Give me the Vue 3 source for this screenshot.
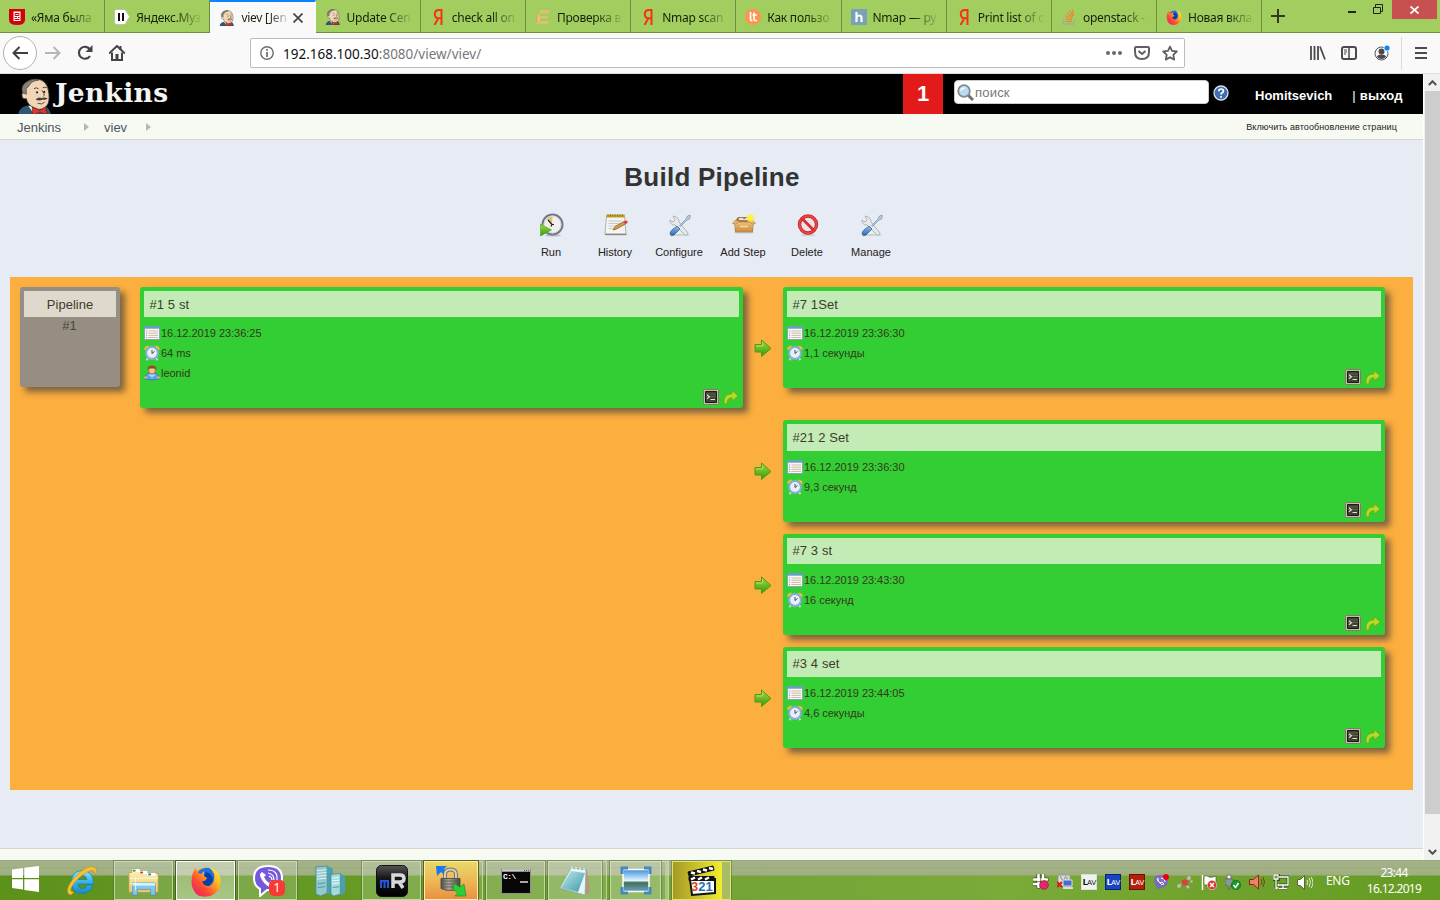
<script setup>
const tabs = [
  { icon: 'news', title: '«Яма была' },
  { icon: 'music', title: 'Яндекс.Муз' },
  { icon: 'butler', title: 'viev [Jen', active: true },
  { icon: 'butler', title: 'Update Cen' },
  { icon: 'yandex', title: 'check all on' },
  { icon: 'cee', title: 'Проверка в' },
  { icon: 'yandex', title: 'Nmap scan' },
  { icon: 'lt', title: 'Как пользо' },
  { icon: 'habr', title: 'Nmap — ру' },
  { icon: 'yandex', title: 'Print list of c' },
  { icon: 'stack', title: 'openstack -' },
  { icon: 'firefox', title: 'Новая вкла,' },
]
const actions = [
  { icon: 'run', label: 'Run' },
  { icon: 'history', label: 'History' },
  { icon: 'tools', label: 'Configure' },
  { icon: 'box', label: 'Add Step' },
  { icon: 'delete', label: 'Delete' },
  { icon: 'tools', label: 'Manage' },
]
const first = { title: '#1 5 st', rows: [['calendar', '16.12.2019 23:36:25'], ['clock', '64 ms'], ['user', 'leonid']] }
const steps = [
  { title: '#7 1Set', rows: [['calendar', '16.12.2019 23:36:30'], ['clock', '1,1 секунды']] },
  { title: '#21 2 Set', rows: [['calendar', '16.12.2019 23:36:30'], ['clock', '9,3 секунд']] },
  { title: '#7 3 st', rows: [['calendar', '16.12.2019 23:43:30'], ['clock', '16 секунд']] },
  { title: '#3 4 set', rows: [['calendar', '16.12.2019 23:44:05'], ['clock', '4,6 секунды']] },
]
const apps = [
  { icon: 'ie' },
  { icon: 'explorer', cls: 'open' },
  { icon: 'firefox', cls: 'open focus' },
  { icon: 'viber', cls: 'open' },
  { icon: 'servers' },
  { icon: 'mr', cls: 'open' },
  { icon: 'lock', cls: 'open alert stacked' },
  { icon: 'cmd', cls: 'open' },
  { icon: 'notepad', cls: 'open stacked' },
  { icon: 'picture', cls: 'open stacked twice' },
  { icon: 'clapper', cls: 'open progress' },
]
const tray = ['slack', 'netpc', 'lavw', 'lavb', 'lavr', 'viberS', 'molecule', 'flag', 'usb', 'spkred', 'network', 'speaker']
</script>

<template>
  <div class="screen">
    <svg class="defs" width="0" height="0">
      <defs>
        <linearGradient id="gBlue" x1="0" y1="0" x2="0" y2="1"><stop offset="0" stop-color="#8fc0ee" /><stop offset="1" stop-color="#2a64ae" /></linearGradient>
        <linearGradient id="gGreen" x1="0" y1="0" x2="0" y2="1"><stop offset="0" stop-color="#a8dc3c" /><stop offset="1" stop-color="#2f9a10" /></linearGradient>
        <linearGradient id="gBox" x1="0" y1="0" x2="0" y2="1"><stop offset="0" stop-color="#eec07c" /><stop offset="1" stop-color="#c98a3a" /></linearGradient>
        <linearGradient id="gFox" x1="1" y1="0" x2="0" y2="1"><stop offset="0" stop-color="#fff44f" /><stop offset=".35" stop-color="#ffb01f" /><stop offset=".65" stop-color="#ff4a32" /><stop offset="1" stop-color="#e5167a" /></linearGradient>
        <linearGradient id="gIe" x1="0" y1="0" x2="0" y2="1"><stop offset="0" stop-color="#8ee3fa" /><stop offset=".5" stop-color="#35b4e8" /><stop offset="1" stop-color="#178cc8" /></linearGradient>
        <linearGradient id="gFolder" x1="0" y1="0" x2="0" y2="1"><stop offset="0" stop-color="#fdf3b8" /><stop offset="1" stop-color="#eacb6c" /></linearGradient>
        <linearGradient id="gTeal" x1="0" y1="0" x2="1" y2="1"><stop offset="0" stop-color="#bfe9ea" /><stop offset="1" stop-color="#3c9aaa" /></linearGradient>
        <linearGradient id="gSky" x1="0" y1="0" x2="0" y2="1"><stop offset="0" stop-color="#3c8ee2" /><stop offset=".5" stop-color="#e0f2fb" /><stop offset=".6" stop-color="#45705b" /><stop offset="1" stop-color="#69a3c0" /></linearGradient>
        <linearGradient id="gDark" x1="0" y1="0" x2="0" y2="1"><stop offset="0" stop-color="#555" /><stop offset=".4" stop-color="#171717" /><stop offset="1" stop-color="#000" /></linearGradient>
        <linearGradient id="gMetal" x1="0" y1="0" x2="1" y2="0"><stop offset="0" stop-color="#55524c" /><stop offset=".4" stop-color="#aaa59b" /><stop offset="1" stop-color="#4a4741" /></linearGradient>
      </defs>
      <symbol id="news" viewBox="0 0 16 16"><path d="M0 0h16v11q0 5-8 5T0 11z" fill="#d4000c" /><path d="M4.5 2.5h7v9.500h-7z" fill="#fff" /><path d="M6 4.500h4v2H6zM5.500 8.500h2.500M9 8.500h1.500M5.500 10.500h5" stroke="#d4000c" fill="none" /></symbol>
      <symbol id="music" viewBox="0 0 16 16"><path d="M2.500.500h8.500l4.500 7-4.500 8H2.500q-2 0-2-2v-11q0-2 2-2z" fill="#fff" stroke="#b9c7a4" /><path d="M5 4v8M9 4v8" stroke="#111" stroke-width="2" /></symbol>
      <symbol id="butler" viewBox="0 0 33 36">
        <path d="M0 36Q1 29 8 27l15-1q8 2 9 10z" fill="#31556c" /><path d="M10 27l6 9 7-9z" fill="#e8eef0" />
        <path d="M5 14Q4 2 17 1q12 0 13 14 1 8-2 12-4 5-10 3Q9 27 8 20q-4-1-3-6z" fill="#f0d6b7" stroke="#332d26" stroke-width=".8" />
        <path d="M5 16Q1 7 10 3q5-3 10-1-7 1-9 5-1 2-3 3v6l-1-1z" fill="#85807a" stroke="#3b3733" stroke-width=".6" />
        <path d="M6 15q-3-1-2 2 0 4 4 3" fill="#f0d6b7" stroke="#5a4b3c" stroke-width=".7" />
        <path d="M15.500 10.500q2-2 4.500 0M24 9.500q2-1 4 0M23 12q4 4 1.500 6" fill="none" stroke="#4b3b2c" stroke-width=".9" />
        <circle cx="18.500" cy="14" r="1" fill="#222" /><circle cx="25.500" cy="13.500" r="1" fill="#222" />
        <path d="M17 21q3-3 6-1.500 3-1.500 6 .5-3 2-5 1-3 2-7 0z" fill="#4a4039" /><path d="M19 24.500q4 2 7-1" fill="none" stroke="#6b3a2d" stroke-width=".9" />
        <path d="M14 28l7 3.500 6-3.500 1 7.500-7-2-7 2.500z" fill="#d33833" stroke="#73140f" stroke-width=".6" />
      </symbol>
      <symbol id="yandex" viewBox="0 0 16 16"><path d="M11.500 0v16M12 1H9Q4.800 1 4.800 5.200q0 4 4 4H12M8.500 9L4.500 16" fill="none" stroke="#f7330e" stroke-width="2" /></symbol>
      <symbol id="cee" viewBox="0 0 16 16"><path d="M4 1h11l-1 3.500H5zM1 6l4-1v7H13l1 1-1 2H1z" fill="#e0be6c" /><path d="M4 7.500h9V9H5v2H3z" fill="#e6c37c" /><path d="M1.500 6v8" stroke="#e69b72" /></symbol>
      <symbol id="lt" viewBox="0 0 16 16"><circle cx="8" cy="8" r="8" fill="#ff9450" /><path d="M5.500 3v7q0 2 2 1.500M9 3.500v6q0 2.500 3 2M7.500 6H12" fill="none" stroke="#fff" stroke-width="1.700" /></symbol>
      <symbol id="habr" viewBox="0 0 16 16"><path d="M0 0h16v16H0z" fill="#78a2b7" /><path d="M5.500 3v10M5.500 8.500q1-2 3-2 2 0 2 2.500v4" fill="none" stroke="#fff" stroke-width="2.200" /></symbol>
      <symbol id="stack" viewBox="0 0 16 16"><path d="M2 10v5h11v-5" fill="none" stroke="#a8ab9b" stroke-width="1.300" /><path d="M4 12.500h7M4 10l7 .8M4.500 7l6.500 2.200M6 4l5.500 4M8.500 1.500L12 7M11.500.500l1 6" stroke="#ef8236" stroke-width="1.200" /></symbol>
      <symbol id="firefox" viewBox="0 0 32 32"><circle cx="16" cy="17" r="14.500" fill="url(#gFox)" /><path d="M8 7q5-5 11-4 7 4 5 12-2 8-10 6z" fill="#1e6fe8" /><path d="M16 7q7 2 7 9l-5 6-8-2z" fill="#0a3ea6" /><path d="M2 17Q1 8 6 3l1 5 4 1 3-3v5l3 2q-1 3-5 3.500 3 6 9 4 6-3 4-10-2-3-3-8 10 6 8 16-3 12-15 13T2 17z" fill="url(#gFox)" /></symbol>

      <symbol id="run" viewBox="0 0 24 24"><ellipse cx="13" cy="22.500" rx="8" ry="1" fill="#b9bec7" /><circle cx="12.500" cy="11.500" r="10" fill="#f0f0ec" stroke="#77748f" stroke-width="2" /><circle cx="12.500" cy="11.500" r="8.500" fill="none" stroke="#cfcfd6" stroke-width=".8" /><path d="M12 11L6.500 6q2.500-2.500 6-2.500z" fill="#dcc766" /><path d="M8 7l4 4.500M12 11.500h2M12 11.500l-1 2" stroke="#222" stroke-width="1.200" fill="none" /><path d="M.500 11l11 6-11 6z" fill="url(#gGreen)" stroke="#48a42c" stroke-width=".6" /></symbol>
      <symbol id="history" viewBox="0 0 24 24"><path d="M2.500 3h18l1.500 18H1z" fill="#f4f4f0" stroke="#a2a2a0" stroke-width=".8" /><path d="M1 21.500h21.500" stroke="#85857f" stroke-width="1.300" /><path d="M2.500 1.500h18v3h-18z" fill="#c2a22d" /><path d="M3.500 2.500h17" stroke="#8a7219" stroke-width="2" stroke-dasharray="1 1.400" /><path d="M4.500 8h13M4.500 10.500h11M4.500 13h6M4.500 15.500h4" stroke="#c0c2c5" stroke-width=".9" /><path d="M9 17l2-3.500 9-5 1.500 2.500-9 5z" fill="#e0993f" stroke="#7b5028" stroke-width=".7" /><path d="M19.500 8.500l2.500-1q2 0 1.500 2.500l-2 1z" fill="#dd3c39" /></symbol>
      <symbol id="tools" viewBox="0 0 24 24"><ellipse cx="12" cy="22" rx="10" ry="1" fill="#ccd1da" /><path d="M5 3l2 4-2 2-3-2q0 5 5 5l10 10q3 1 3-2L11 9q0-5-6-6z" fill="#e6e9ea" stroke="#a2a7a9" stroke-width=".8" /><path d="M22 2l-2.500 1-2 3.500-6 6 1 1 6-6L22 5.500z" fill="#b7cbe0" stroke="#8799ae" stroke-width=".8" /><path d="M9 13l3 3-6 6q-3 2-4-1 0-2 2-4z" fill="url(#gBlue)" stroke="#3a659c" stroke-width=".8" /></symbol>
      <symbol id="box" viewBox="0 0 24 24"><ellipse cx="12" cy="19.500" rx="10" ry="1" fill="#c5cad3" /><path d="M3 8l3-4h12l3 4v11H3z" fill="#a87438" /><path d="M6 7.500l1-3h4l1 1.500 2-1.500h3l1 3z" fill="#ece4da" stroke="#8d6a4a" stroke-width=".7" /><path d="M2.500 9h19l-1 10h-17z" fill="url(#gBox)" stroke="#b98540" stroke-width=".7" /><path d="M3 7.500L.500 10.500l3.500.500 3-3zM21 7.500l2.500 3-3.500.500-3-3z" fill="#edb86c" stroke="#b98540" stroke-width=".7" /><path d="M8 13.500h8" stroke="#f3d8ab" stroke-width="1.500" /><circle cx="18.500" cy="5" r="4" fill="#fbe96c" opacity=".7" /><circle cx="18.500" cy="5" r="2.800" fill="#fbf62e" /></symbol>
      <symbol id="delete" viewBox="0 0 24 24"><ellipse cx="12" cy="22" rx="7" ry="1" fill="#c5cad3" /><circle cx="12" cy="11.500" r="8.500" fill="#eae6e8" stroke="#c2242a" stroke-width="3.400" /><circle cx="12" cy="11.500" r="8.500" fill="none" stroke="#ea4444" stroke-width="2" /><path d="M6 5.500l12 12" stroke="#d92e31" stroke-width="2.800" /></symbol>
      <symbol id="calendar" viewBox="0 0 16 16"><path d="M.500 2h15v12.500H.500z" fill="#f8f7f0" stroke="#8fa2b2" /><path d="M0 2.500h16" stroke="#6a9bca" stroke-width="2.400" /><path d="M2 6h1.200M2 8.200h1.200M2 10.400h1.200M2 12.500h1.200" stroke="#7aa7d2" /><path d="M4.500 6H14M4.500 8.200H14M4.500 10.400H14M4.500 12.500H14" stroke="#c6b5a6" stroke-width=".9" /></symbol>
      <symbol id="clock" viewBox="0 0 16 16"><path d="M.800 5Q0 .800 5 1zM15.200 5q.8-4.200-4.200-4z" fill="#f6d04a" stroke="#e6ac3d" stroke-width=".8" /><path d="M4 13l-1.500 2.200M12 13l1.500 2.200" stroke="#c7d6dd" stroke-width="2" /><circle cx="8" cy="8" r="5.900" fill="#e6f0f6" stroke="#85afd6" stroke-width="2" /><path d="M8 5v3.500l2.500-2" fill="none" stroke="#3f4a58" stroke-width="1" /></symbol>
      <symbol id="user" viewBox="0 0 16 16"><path d="M1 14q0-5.500 5-6h4q5 .5 5 6-7 2-14 0z" fill="#5fa3ea" stroke="#2f70b4" stroke-width=".8" /><path d="M4 9.500l4 3 4-3" fill="#b4dbfc" /><circle cx="8" cy="5.500" r="3.500" fill="#f3c393" stroke="#8a4a21" stroke-width=".6" /><path d="M3.800 5Q3 .500 8 .500T12.200 5l-1.700-1.500h-5z" fill="#934b1d" /><path d="M.500 11.500h2.200v2H.500zM13.300 11.500h2.200v2h-2.200z" fill="#f0bb8b" /></symbol>
      <symbol id="arrow" viewBox="0 0 18 18"><path d="M1 5.500h6.500V1L17 9.500l-9.500 8v-4.500H1z" fill="url(#gGreen)" stroke="#4d9a1c" /><path d="M2 7h6.500V3.500" fill="none" stroke="#b5dc62" /></symbol>
      <symbol id="console" viewBox="0 0 16 16"><path d="M.500 1.500q0-1 1-1h13q1 0 1 1v13q0 1-1 1h-13q-1 0-1-1z" fill="#c5bdaf" stroke="#85796a" /><path d="M2.500 2.500h11v11h-11z" fill="#3d4430" stroke="#1b1a12" /><path d="M3 5h10M3 7.500h10" stroke="#5c6549" /><path d="M4 5.800l2.500 2L4 9.800M7.500 10.500H12" fill="none" stroke="#dfe3d3" stroke-width="1.100" /></symbol>
      <symbol id="redo" viewBox="0 0 16 16"><path d="M1 15q-1.200-10 8-10.200V1.500L15.300 7 9 12V8.800Q4 8.500 4 15z" fill="#b2dc28" stroke="#6ea81a" stroke-width=".9" /></symbol>

      <symbol id="ie" viewBox="0 0 32 32"><path d="M27 20q-3 8.500-11 8.500-10.500 0-10.500-11.500T17 5.500q10.500 1 10.500 13.500H12q1 5 5 4.500 3 0 4-3.500zM12 14.500h9q-1-4-4.500-4T12 14.500z" fill="url(#gIe)" stroke="#147bb5" stroke-width=".7" /><path d="M3 29.500Q-1.500 25 7 14 21-1.500 29 2.500q2.500 2 .5 8-.5-5.500-4-5Q18 7 9 17 1 27 8 27q-3 4-5 2.500z" fill="#f7c22f" stroke="#c98918" stroke-width=".5" /></symbol>
      <symbol id="explorer" viewBox="0 0 34 32"><path d="M1 7h3V3h9v3h7v2h12v20H1z" fill="url(#gFolder)" stroke="#b69e58" stroke-width=".8" /><path d="M4.500 3.500h8v3h-8zM12.500 5.500h8v3h-8zM20.500 7.500h9v3h-9z" fill="#fff" /><path d="M5 4h3v2H5z" fill="#2fa03c" /><path d="M13 6h3v2h-3z" fill="#c8402f" /><path d="M21.500 8h3v2h-3z" fill="#2679c5" /><path d="M2 13h30" stroke="#fff8cf" /><path d="M5 31V18h24v13h-5v-6H10v6z" fill="#86c6e8" stroke="#4a93c0" stroke-width=".8" /><path d="M5 18h24v3H5z" fill="#d3f0fb" /><path d="M8 12v14M2 19h12" stroke="#fff" opacity=".7" /></symbol>
      <symbol id="viber" viewBox="0 0 32 32"><path d="M16 1Q2 1 2 13q0 8 6 11v7l7-6q15 1 15-12Q30 1 16 1z" fill="#7459dd" stroke="#fff" stroke-width="2" /><path d="M10 7q-4 2 0 8 5 8 11 7 3-2 2-4l-4-2-2 2q-4-3-5-6l2-2z" fill="#fff" /><path d="M16 8q6 1 6 7M16 5q10 0 9 10M17 11q3 1 3 4" fill="none" stroke="#fff" stroke-width="1.200" /></symbol>
      <symbol id="servers" viewBox="0 0 34 34"><path d="M2 2l12-1v29l-7 3-5-2z" fill="#92c8d0" stroke="#397f91" stroke-width=".7" /><path d="M14 1l6 3v25l-6 2z" fill="#4aa0b0" /><path d="M18 10l10-1v22l-7 2-3-2z" fill="#a4dade" stroke="#397f91" stroke-width=".7" /><path d="M28 9l5 3v18l-5 2z" fill="#4aa0b0" /><path d="M3 6l10-1M3 9l10-1M3 12l10-1M3 15l10-1M19 14l8-1M19 17l8-1M19 20l8-1" stroke="#edf9f8" /><path d="M4 20l8-1M4 24l8-1M20 24l7-1" stroke="#4f98a6" /></symbol>
      <symbol id="mr" viewBox="0 0 32 32"><rect x=".5" y=".5" width="31" height="31" rx="5" fill="url(#gDark)" stroke="#111" /><path d="M5 23v-7h7v7M8.500 16v7" fill="none" stroke="#2458d4" stroke-width="2" /><path d="M17 23V10h7q4 0 4 3.500T24 17h-7M23 17l4 6" fill="none" stroke="#d8d9dc" stroke-width="3.500" /></symbol>
      <symbol id="lock" viewBox="0 0 32 32"><path d="M1 1h11L9 4l3 4-2 3-4-4-4 4z" fill="#1778ef" /><path d="M10 15V9.500Q10 4.500 15.500 4.500T21 9.500V15" fill="none" stroke="#77736b" stroke-width="4" /><path d="M10 15V9.500Q10 4.500 15.500 4.500T21 9.500V15" fill="none" stroke="#d2cfc8" stroke-width="2" /><path d="M6 13.500h19v10q-9.500 4-19 0z" fill="url(#gMetal)" stroke="#45413b" stroke-width=".8" /><path d="M7 16h17M7 19h17M7 22h17" stroke="#54504a" stroke-width=".7" /><path d="M19 18l6 4 4-3 2 12H20l3-3-5-4z" fill="#2ad033" stroke="#17872a" stroke-width=".6" /></symbol>
      <symbol id="cmd" viewBox="0 0 32 32"><path d="M1.500 4.500h29v24h-29z" fill="#070707" stroke="#8b938a" /><path d="M2 5.500h28" stroke="#c7cbce" stroke-width="2.400" /><path d="M24 5.500h5" stroke="#555" stroke-dasharray="1 1" /><path d="M20 17h8" stroke="#fff" stroke-width="1.300" /></symbol>
      <symbol id="notepad" viewBox="0 0 32 32"><path d="M14 3l14 2 3 22-5 3L2 24z" fill="#b3977a" /><path d="M12 3l15 2-1 25L1 23z" fill="#e8f5f4" stroke="#7badb0" stroke-width=".7" /><path d="M12 6l14 2-7 19L2 23z" fill="url(#gTeal)" /><path d="M13 1.500v4M17 2v4M21 2.500v4M25 3v4" stroke="#f8fbf9" /></symbol>
      <symbol id="picture" viewBox="0 0 32 32"><path d="M3 4.500h26v22H3z" fill="url(#gSky)" stroke="#fff" stroke-width="1.500" /><path d="M2 9V3h6M24 3h6v6M30 22v6h-6M8 28H2v-6" fill="none" stroke="#4589bd" stroke-width="3" /></symbol>
      <symbol id="clapper" viewBox="0 0 32 32"><path d="M4 14h25v14L6 30z" fill="#fff" stroke="#111" stroke-width="2" /><path d="M2 7L27 1l1 4L3 11zM3 11.500h25v4H3z" fill="#111" stroke="#111" /><path d="M5 7.500l4 1M11 6l4 1M17 4.500l4 1M23 3l4 1M5 14.500l4-2M12 14.500l4-2M19 14.500l4-2" stroke="#fff" stroke-width="2.500" /></symbol>

      <symbol id="slack" viewBox="0 0 16 16"><path d="M5.500 1v12M10 1v8M1 5.500h13M1 10h8" stroke="#3c5a20" stroke-width="4.200" stroke-linecap="round" /><path d="M5.500 1v12M10 1v8M1 5.500h13M1 10h8" stroke="#fff" stroke-width="2.600" stroke-linecap="round" /><path d="M7.700 1v12M2 7.700h12" stroke="#4d6e2c" stroke-width=".8" /><circle cx="11" cy="11" r="4.400" fill="#e9236e" stroke="#81223f" stroke-width=".6" /></symbol>
      <symbol id="netpc" viewBox="0 0 16 16"><path d="M1 1h12v11H1z" fill="#d8dedc" stroke="#929892" /><path d="M3 2l3 5 3-5M10 3v4" fill="none" stroke="#888" /><path d="M6 6h9v6H6z" fill="#456bd4" stroke="#ddd" /><path d="M6 14h10" stroke="#ddd" stroke-width="2" /><path d="M0 8l5 5M5 8l-5 5" stroke="#d61a19" stroke-width="2" /></symbol>
      <symbol id="viberS" viewBox="0 0 16 16"><path d="M7 1Q0 1 1 8q1 4 3 5v3l3-2q8 0 8-7T7 1z" fill="#7b6bbc" /><path d="M5 4q-2 1 1 4 3 4 5 2L9 8 7 9 5 7zM8 4q4 0 4 4" fill="none" stroke="#fff" /><circle cx="13" cy="3" r="3" fill="#ed0016" /></symbol>
      <symbol id="molecule" viewBox="0 0 16 16"><path d="M1 12l6-4 6-5M6 9l5 4" stroke="#bbb5ab" stroke-width="1.500" /><circle cx="8" cy="8.500" r="3.300" fill="#d0463a" /><g fill="#c2b8b0"><circle cx="2" cy="12" r="2" /><circle cx="12" cy="4" r="2" /><circle cx="11" cy="13" r="1.500" /><circle cx="14.500" cy="7.500" r="1.200" /></g></symbol>
      <symbol id="flag" viewBox="0 0 16 16"><path d="M1.500 1v15" stroke="#fff" stroke-width="1.500" /><path d="M3 2q3-1 5 1 3 1 7-1v9H3z" fill="#fff" stroke="#435f32" stroke-width=".7" /><circle cx="11" cy="11" r="4.700" fill="#d63732" stroke="#fff" stroke-width=".5" /><path d="M9 9l4 4M13 9l-4 4" stroke="#fff" stroke-width="1.500" /></symbol>
      <symbol id="usb" viewBox="0 0 16 16"><path d="M2 1h4v4H2z" fill="#eee" stroke="#777" /><path d="M0 5h8v5l-3 2v3H3v-3l-3-2z" fill="#8d9891" stroke="#555" stroke-width=".6" /><circle cx="11" cy="11" r="4.700" fill="#169a2c" stroke="#076917" stroke-width=".6" /><path d="M8.500 11l2 2.500L13.500 9" fill="none" stroke="#fff" stroke-width="1.500" /></symbol>
      <symbol id="spkred" viewBox="0 0 16 16"><path d="M.500 5.500h4l5-4.500v14l-5-4.500h-4z" fill="#ed8068" stroke="#91230f" /><path d="M12 5q2 3 0 6M14 3q3 5 0 10" fill="none" stroke="#783d15" /></symbol>
      <symbol id="network" viewBox="0 0 16 16"><path d="M6 3h9v8H6M10 11v3M6 14.500h8M.500.500h5v5h-5zM3 6v8" fill="none" stroke="#334c1c" stroke-width="2.800" /><path d="M6 3h9v8H4.500M10 11v3M6 14.500h8M1 1h4v4H1zM3 5v9h2" fill="none" stroke="#fff" stroke-width="1.300" /></symbol>
      <symbol id="speaker" viewBox="0 0 16 16"><path d="M.500 5.500h3l4-4v14l-4-4h-3z" fill="#fff" stroke="#56683f" /><path d="M10 6q1.500 2.500 0 5M12 4q3 4 0 9M14 3q4 6 0 11" fill="none" stroke="#e3ebd8" /></symbol>
    </svg>

    <div class="tabbar">
      <div v-for="(t, i) in tabs" :key="i" class="tab" :class="{ active: t.active }">
        <svg class="fav"><use :href="'#' + t.icon" /></svg>
        <span class="tab-title">{{ t.title }}</span>
        <svg v-if="t.active" class="tab-close" viewBox="0 0 10 10"><path d="M.5.5l9 9M9.500.5l-9 9" stroke="#444" stroke-width="1.7" /></svg>
      </div>
      <svg class="plus" viewBox="0 0 14 14"><path d="M7 0v14M0 7h14" stroke="#2f3c1f" stroke-width="2" /></svg>
      <div class="winctl">
        <svg width="10" height="14" viewBox="0 0 10 14"><path d="M1 12h8" stroke="#222" stroke-width="2" /></svg>
        <svg width="10" height="10" viewBox="0 0 10 10"><path d="M.5 3.500h7v6h-7zM2.500 3V.500h7v7H8" fill="none" stroke="#222" /></svg>
        <div class="winclose"><svg width="9" height="8" viewBox="0 0 9 8"><path d="M.5.500l8 7M8.500.500l-8 7" stroke="#fff" stroke-width="1.700" /></svg></div>
      </div>
    </div>

    <div class="navbar">
      <div class="back"><svg width="16" height="14" viewBox="0 0 16 14"><path d="M16 7H1.500M7.500 1l-6 6 6 6" fill="none" stroke="#3f3f42" stroke-width="2" /></svg></div>
      <svg class="fwd" width="16" height="14" viewBox="0 0 16 14"><path d="M0 7h14.500M8.500 1l6 6-6 6" fill="none" stroke="#b6b6b7" stroke-width="2" /></svg>
      <svg class="reload" width="16" height="16" viewBox="0 0 16 16"><path d="M13 11a6 6 0 1 1 0-6.500" fill="none" stroke="#444448" stroke-width="2.200" /><path d="M15.500 0v7h-7z" fill="#444448" /></svg>
      <svg class="home" width="16" height="16" viewBox="0 0 16 16"><path d="M0 8.500L8 1l8 7.500" fill="none" stroke="#444448" stroke-width="2" /><path d="M3 7.500v7.500h10V7.500M11.500 1v4" fill="none" stroke="#444448" stroke-width="2" /><path d="M6.500 9h3v6h-3z" fill="#444448" /></svg>
      <div class="url">
        <svg width="14" height="14" viewBox="0 0 14 14"><circle cx="7" cy="7" r="6.200" fill="none" stroke="#6c6c70" stroke-width="1.400" /><path d="M7 6v5M7 3v1.800" stroke="#6c6c70" stroke-width="1.700" /></svg>
        <span class="addr">192.168.100.30<i>:8080/view/viev/</i></span>
        <svg class="push" width="16" height="4" viewBox="0 0 16 4"><g fill="#68686b"><circle cx="2" cy="2" r="2" /><circle cx="8" cy="2" r="2" /><circle cx="14" cy="2" r="2" /></g></svg>
        <svg width="16" height="14" viewBox="0 0 16 14"><path d="M2 1h12q1 0 1 1v4q0 7-7 7T1 6V2q0-1 1-1z" fill="none" stroke="#606064" stroke-width="2" /><path d="M4.500 5L8 8l3.500-3" fill="none" stroke="#606064" stroke-width="2" /></svg>
        <svg width="16" height="16" viewBox="0 0 16 16"><path d="M8 1.500l2 4.400 4.800.6-3.500 3.300.9 4.800L8 12.200l-4.200 2.400.9-4.800L1.200 6.500 6 5.900z" fill="none" stroke="#606064" stroke-width="1.800" stroke-linejoin="round" /></svg>
      </div>
      <svg class="lib" width="16" height="14" viewBox="0 0 16 14"><path d="M1 0v14M4.500 0v14M8 0v14M10 .500l5 13" stroke="#4a4a4f" stroke-width="1.800" /></svg>
      <svg class="side" width="16" height="14" viewBox="0 0 16 14"><rect x="1" y="1" width="14" height="12" rx="2" fill="none" stroke="#4a4a4f" stroke-width="2" /><path d="M8 1v12" stroke="#4a4a4f" stroke-width="1.500" /><path d="M3 4h3M3 6h3M3 8h2" stroke="#4a4a4f" /></svg>
      <svg class="acct" width="16" height="16" viewBox="0 0 16 16"><circle cx="7.500" cy="8.500" r="6.500" fill="none" stroke="#56565a" /><circle cx="7.500" cy="6.500" r="3" fill="#4a4a4f" /><path d="M3 12q0-2.500 4.500-2.500T12 12q-4.500 4-9 0z" fill="#4a4a4f" /><circle cx="13" cy="3" r="3.400" fill="#f9f9fa" /><circle cx="13" cy="3" r="2.600" fill="#0a84ff" /></svg>
      <div class="sep"></div>
      <svg class="menu" width="12" height="12" viewBox="0 0 12 12"><path d="M0 1h12M0 6h12M0 11h12" stroke="#4a4a4f" stroke-width="2" /></svg>
    </div>

    <div class="viewport">
      <div class="page">
        <header class="jhead">
          <svg class="jface"><use href="#butler" /></svg>
          <span class="jname">Jenkins</span>
          <span class="badge">1</span>
          <div class="search">
            <svg width="17" height="17" viewBox="0 0 17 17"><path d="M11 11l5 5" stroke="#74716d" stroke-width="3" /><circle cx="7" cy="7" r="5.800" fill="#b9dcf6" stroke="#858a8f" stroke-width="1.800" /><path d="M4 7q0-3 4-3" fill="none" stroke="#fff" stroke-width="1.300" /></svg>
            <span>поиск</span>
          </div>
          <svg class="help" width="16" height="16" viewBox="0 0 16 16"><circle cx="8" cy="8" r="7" fill="#416eae" stroke="#d7e2ef" stroke-width="1.300" /><path d="M5.800 6.300q0-2.300 2.300-2.300 2.300 0 2.300 2 0 1.200-1.200 1.800T8 9.500M8 11v1.700" fill="none" stroke="#fff" stroke-width="1.700" /></svg>
          <b class="who">Homitsevich</b><b class="out"><i>|</i> выход</b>
        </header>
        <nav class="crumbs">
          <span class="c1">Jenkins</span><svg class="tri" viewBox="0 0 5 8"><path d="M0 0l5 4-5 4z" fill="#b5b8b1" /></svg>
          <span class="c2">viev</span><svg class="tri" viewBox="0 0 5 8"><path d="M0 0l5 4-5 4z" fill="#b5b8b1" /></svg>
          <span class="auto">Включить автообновление страниц</span>
        </nav>
        <main>
          <h1>Build Pipeline</h1>
          <div class="actions">
            <div v-for="a in actions" :key="a.label" class="action"><svg><use :href="'#' + a.icon" /></svg><span>{{ a.label }}</span></div>
          </div>
          <section class="board">
            <div class="pipe"><div class="card-head">Pipeline</div><div class="num">#1</div></div>
            <div class="card card-first">
              <div class="card-head">{{ first.title }}</div>
              <div v-for="r in first.rows" :key="r[1]" class="row"><svg><use :href="'#' + r[0]" /></svg><span>{{ r[1] }}</span></div>
              <div class="card-foot"><svg><use href="#console" /></svg><svg><use href="#redo" /></svg></div>
            </div>
            <div class="steps">
              <div v-for="(s, i) in steps" :key="i" class="step">
                <div class="arr"><svg><use href="#arrow" /></svg></div>
                <div class="card">
                  <div class="card-head">{{ s.title }}</div>
                  <div v-for="r in s.rows" :key="r[1]" class="row"><svg><use :href="'#' + r[0]" /></svg><span>{{ r[1] }}</span></div>
                  <div class="card-foot"><svg><use href="#console" /></svg><svg><use href="#redo" /></svg></div>
                </div>
              </div>
            </div>
          </section>
        </main>
        <footer></footer>
      </div>
      <div class="scroll">
        <svg viewBox="0 0 9 6"><path d="M.800 5l3.700-3.700L8.200 5" fill="none" stroke="#505050" stroke-width="2" /></svg>
        <div class="thumb"></div>
        <svg viewBox="0 0 9 6"><path d="M.800 1l3.700 3.700L8.200 1" fill="none" stroke="#505050" stroke-width="2" /></svg>
      </div>
    </div>

    <div class="taskbar">
      <div class="start"><svg width="27" height="26" viewBox="0 0 27 26"><path d="M0 3.500l11-1.600V12H0zM12.300 1.700L27 0v12H12.300zM0 13.300h11v10.200L0 22zM12.300 13.300H27V26l-14.700-2z" fill="#fff" /></svg></div>
      <div v-for="a in apps" :key="a.icon" class="app" :class="a.cls">
        <div class="face">
          <svg><use :href="'#' + a.icon" /></svg>
          <span v-if="a.icon === 'viber'" class="count">1</span>
          <span v-if="a.icon === 'cmd'" class="prompt">C:\</span>
          <span v-if="a.icon === 'clapper'" class="nums"><em>3</em>21</span>
        </div>
      </div>
      <div class="tray">
        <template v-for="t in tray" :key="t">
          <span v-if="t.startsWith('lav')" class="lav" :class="t"><b>L</b>AV</span>
          <svg v-else><use :href="'#' + t" /></svg>
        </template>
      </div>
      <span class="lang">ENG</span>
      <div class="time"><span>23:44</span><span>16.12.2019</span></div>
    </div>
  </div>
</template>

<style>
body { margin: 0; overflow: hidden; }
</style>

<style scoped>
* { box-sizing: border-box; }
.screen { width: 1440px; height: 900px; display: flex; flex-direction: column; font-family: "Liberation Sans", Arial, sans-serif; color: #333; overflow: hidden; background: #e7ebf3; }
.defs { position: absolute; }
svg { display: block; flex: none; }
i { font-style: normal; }

.tabbar { height: 33px; flex: none; display: flex; background: #a2ce60; border-bottom: 1px solid #6f8f40; font: 12px "Noto Sans", "Open Sans", sans-serif; color: #16200a; }
.tab { width: 105.2px; flex: none; display: flex; align-items: center; padding: 2px 0 0 9px; border-right: 1px solid #6f8f40; height: 32px; }
.tab.active { background: #f9f9fa; height: 33px; border-top: 2px solid #0a84ff; border-right-color: #f9f9fa; padding-top: 0; }
.fav { width: 16px; height: 16px; }
.tab-title { width: 67px; margin-left: 6px; white-space: nowrap; letter-spacing: -.25px; mask-image: linear-gradient(90deg, #000 58%, transparent 100%); }
.active .tab-title { width: 49px; }
.tab-close { width: 10px; height: 10px; margin-left: 3px; }
.plus { width: 14px; height: 14px; margin: 9px 0 0 9px; }
.winctl { margin-left: auto; display: flex; align-items: flex-start; padding-right: 3px; }
.winctl > svg:nth-child(2) { margin: 4px 9px 0 16px; }
.winclose { width: 45px; height: 19px; background: #c75050; display: flex; align-items: center; justify-content: center; }

.navbar { height: 41px; flex: none; display: flex; align-items: center; background: #f9f9fa; border-bottom: 1px solid #ddd; padding-left: 3px; }
.back { width: 34px; height: 34px; border-radius: 50%; border: 1px solid #b1b1b3; background: #fff; display: flex; align-items: center; justify-content: center; }
.fwd { margin-left: 8px; }
.reload { margin-left: 16px; }
.home { margin-left: 16px; }
.url { width: 935px; height: 30px; margin-left: 125px; border: 1px solid #bcbcbe; border-radius: 2px; background: #fff; display: flex; align-items: center; padding: 0 6px 0 9px; gap: 12px; }
.addr { font: 13.5px "Noto Sans", sans-serif; color: #111; margin: 1px 0 0 -3px; white-space: nowrap; }
.addr i { color: #77777a; }
.push { margin-left: auto; }
.lib { margin-left: 125px; }
.side { margin-left: 15px; }
.acct { margin-left: 17px; }
.sep { width: 1px; height: 33px; background: #dcdcdd; margin: 0 13px 0 11px; }

.viewport { height: 786px; flex: none; display: flex; }
.page { width: 1423px; display: flex; flex-direction: column; }
.jhead { height: 40px; background: #000; display: flex; align-items: center; color: #fff; overflow: hidden; }
.jface { width: 34px; height: 37px; margin: 4px 0 0 18px; }
.jname { width: 851px; padding-left: 3px; font: bold 26.500px/36px "DejaVu Serif", serif; letter-spacing: .3px; color: #f4f4f4; margin-top: -2px; }
.badge { width: 40px; height: 40px; flex: none; background: #e21a1a; font: bold 22px/40px "Liberation Sans", sans-serif; text-align: center; }
.search { width: 255px; height: 24px; flex: none; margin: -4px 0 0 11px; border-radius: 4px; background: #fff; border: 1px solid #ccc; display: flex; align-items: center; padding-left: 2px; font-size: 13px; color: #777; letter-spacing: .2px; }
.search span { margin-left: 1px; }
.help { margin: -2px 0 0 4px; }
.who { margin: 3px 0 0 26px; font-size: 13px; }
.out { margin: 3px 0 0 20px; font-size: 13px; white-space: nowrap; letter-spacing: .2px; }
.out i { font-weight: normal; }
.crumbs { height: 26px; background: #f6faf2; border-bottom: 1px solid #d3d7cf; display: flex; align-items: center; padding: 1px 26px 0 17px; font-size: 13px; color: #4d545d; }
.tri { width: 5px; height: 8px; }
.c1 { width: 67px; }
.c2 { width: 42px; }
.crumbs .tri + .c2 { margin-left: 15px; }
.auto { margin-left: auto; font-size: 9px; color: #222; letter-spacing: .1px; white-space: nowrap; }

main { flex: 1; background: #e7ebf3; display: flex; flex-direction: column; align-items: center; }
h1 { margin: 22px 0 0 1px; font-size: 26px; line-height: 30px; letter-spacing: .25px; color: #333; }
.actions { display: flex; margin-top: 21px; }
.action { width: 64px; display: flex; flex-direction: column; align-items: center; font-size: 11px; line-height: 14px; color: #222; }
.action svg { width: 24px; height: 24px; }
.action span { margin: 8px 1px 0 0; white-space: nowrap; }
.board { width: 1403px; height: 513px; margin-top: 18px; background: #fcae3f; display: flex; align-items: flex-start; padding: 10px; }
.pipe, .card { border-radius: 3px; box-shadow: 5px 5px 6px rgba(60, 60, 60, .65); padding: 4px; color: #3c3a28; }
.pipe { width: 100px; height: 100px; background: #968e82; text-align: center; font-size: 13px; }
.card-head { height: 26px; line-height: 27px; font-size: 13px; background: #c2ebb5; padding-left: 5.500px; white-space: nowrap; color: #3f3b2c; letter-spacing: .1px; }
.pipe .card-head { background: #dfd8cd; padding: 0; letter-spacing: 0; }
.num { line-height: 18px; color: #48443c; padding-right: 1px; }
.card { background: #33ce33; display: flex; flex-direction: column; }
.card-first { width: 603px; height: 121px; margin-left: 20px; }
.row { height: 20px; display: flex; align-items: center; font-size: 11px; color: #33361f; white-space: nowrap; }
.card-head + .row { margin-top: 6px; }
.row svg { width: 16px; height: 16px; margin-top: -1px; }
.row span { margin-left: 1px; letter-spacing: -.02px; }
.card-foot { margin: auto 0 -1px; display: flex; justify-content: flex-end; gap: 4px; }
.card-foot svg { width: 16px; height: 16px; }
.steps { margin-left: 11px; }
.step { display: flex; height: 113px; }
.step:first-child { height: 133px; }
.step:nth-child(2) { height: 114px; }
.arr { width: 29px; height: 121px; display: flex; align-items: center; }
.step + .step .arr { height: 101px; }
.arr svg { width: 18px; height: 18px; }
.step .card { width: 602px; height: 101px; }
.step:nth-child(2) .card { height: 102px; }
.step + .step .card-head { line-height: 25px; }
.step:nth-child(2) .card-head { height: 27px; line-height: 27px; }
.step + .step .card-foot { margin-bottom: 0; }
footer { height: 12px; background: #f6faf2; border-top: 1px solid #d3d7cf; }
.scroll { width: 17px; background: #f0f0f0; border-left: 1px solid #fff; display: flex; flex-direction: column; align-items: center; padding: 6px 0 5px; }
.scroll svg { width: 9px; height: 6px; }
.thumb { width: 15px; height: 723px; margin-top: 5px; background: #cdcdcd; }
.scroll svg:last-child { margin-top: auto; }

.taskbar { height: 40px; flex: none; display: flex; padding-top: 1px; background: linear-gradient(180deg, #8fa070 0, #a3b387 1px, #a1b184 7px, #98aa79 8px, #a1b184 9px, #9eaf80 15px, transparent 16px), linear-gradient(90deg, #5c911c, #659a25 25%, #74a437 50%, #7aaa38 70%, #649b22); color: #fff; }
.start { width: 52px; flex: none; display: flex; padding: 5px 0 0 12px; }
.app { width: 59px; height: 39px; flex: none; margin-right: 3px; display: flex; }
.face { width: 59px; display: flex; align-items: center; justify-content: center; position: relative; }
.face svg { width: 32px; height: 32px; }
.open .face { border: 1px solid rgba(215, 225, 195, .75); background: rgba(255, 255, 255, .17); outline: 1px solid rgba(60, 90, 25, .35); outline-offset: 0; }
.focus .face { background: linear-gradient(180deg, rgba(255, 255, 255, .35), rgba(255, 255, 255, .45)); border-color: #fff; outline-color: #46601f; }
.stacked .face { width: 54px; margin: -1px 0; }
.stacked { border: 1px solid rgba(215, 225, 195, .7); border-left: 0; background: rgba(255, 255, 255, .12); }
.twice .face { width: 51px; }
.twice { box-shadow: inset -4px 0 0 -1px rgba(215, 225, 195, .45); }
.alert .face { background: linear-gradient(180deg, #ead76a, #ecb250 60%, #e98f45); border-color: #fff0a6; outline-color: #5f5f22; }
.progress .face { background: linear-gradient(90deg, #a39a25, #f3ec30 49px, #a8bc63 49px); border-color: #e5e36a; }
.count { position: absolute; left: 30px; top: 18px; width: 16px; height: 16px; border-radius: 5px; background: #f93a32; font: 12px/16px "Noto Sans", sans-serif; text-align: center; }
.prompt { position: absolute; left: 16px; top: 9px; font: bold 8px/12px "Liberation Mono", monospace; letter-spacing: -.6px; }
.nums { position: absolute; left: 18px; top: 17px; font: bold 13px/16px "Liberation Sans", sans-serif; color: #2670b0; letter-spacing: 0; }
.nums em { font-style: normal; color: #d34b1b; }
.tray { margin-left: auto; display: flex; gap: 8px; align-items: center; padding-top: 2px; }
.tray svg { width: 16px; height: 16px; }
.lav { width: 16px; height: 16px; font: 8px/14px "Open Sans", "Noto Sans", sans-serif; text-align: center; letter-spacing: -.7px; border: 1px solid #234; white-space: nowrap; display: flex; align-items: baseline; justify-content: center; }
.lav b { font-size: 9.500px; }
.lavw { background: #f0f2ee; color: #111; border-color: #ddd; }
.lavb { background: #1644c4; border-color: #0a226f; }
.lavr { background: #b5200e; border-color: #681309; }
.lang { width: 24px; margin: 0 16px 0 13px; font: 12px/39px "Noto Sans", "Open Sans", sans-serif; letter-spacing: -.3px; }
.time { width: 56px; margin-right: 18px; display: flex; flex-direction: column; align-items: center; padding-top: 4px; font: 12px/16px "Noto Sans", "Open Sans", sans-serif; letter-spacing: -.7px; white-space: nowrap; }
</style>
